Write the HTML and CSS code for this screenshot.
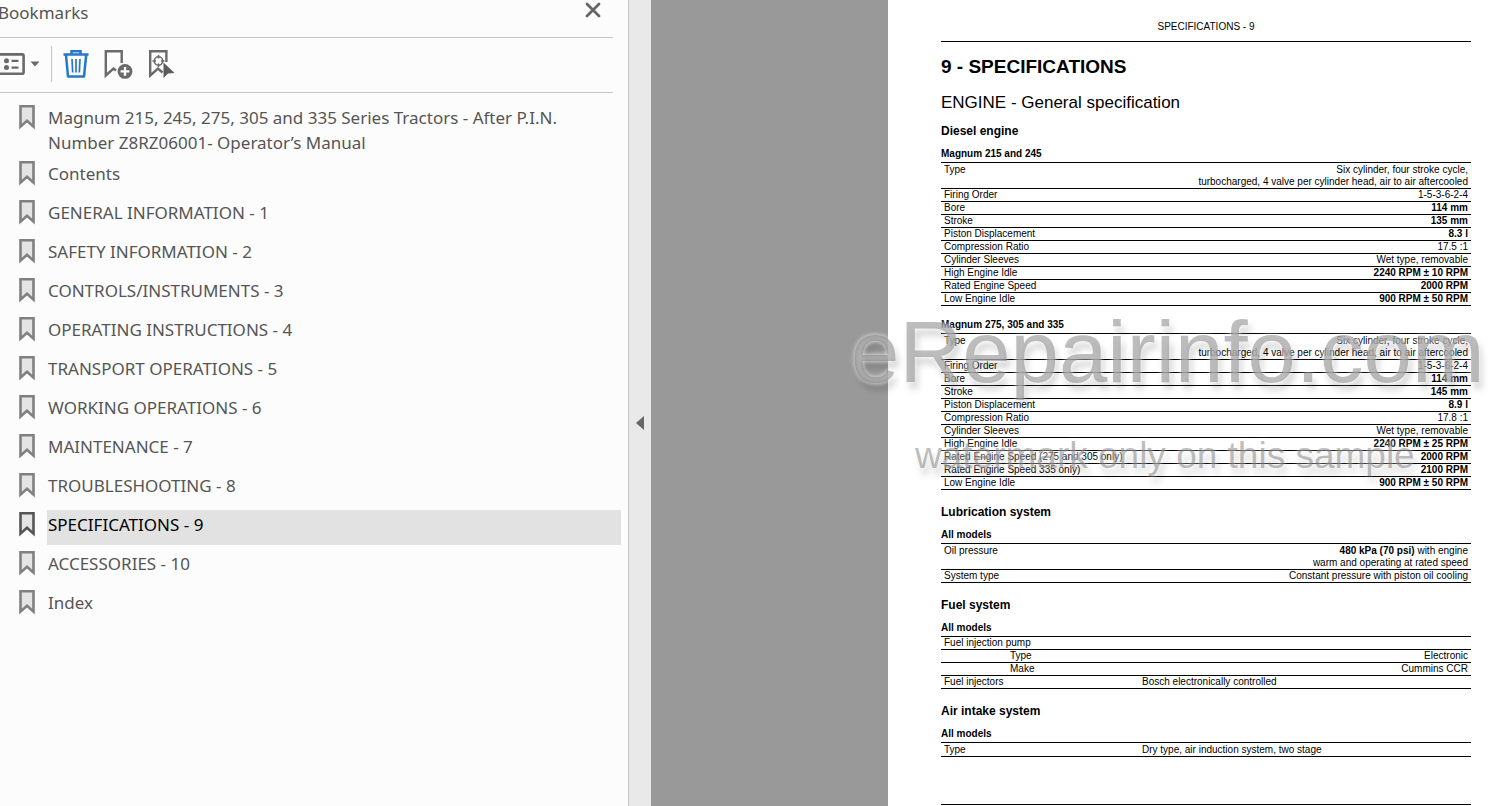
FILE: index.html
```html
<!DOCTYPE html>
<html lang="en">

<head>
    <meta charset="UTF-8">
    <meta name="viewport" content="width=device-width, initial-scale=1.0">
    <link rel="stylesheet" href="styles.css">
    <title>Operator's Manual</title>
</head>

<body>
    <!-- bookmark shape shared by all list items -->
    <svg class="sprite" aria-hidden="true">
        <symbol id="bookmark" viewBox="0 0 18 26">
            <path d="M2.5 2.2H15.5V22.6L9 16.8L2.5 22.6Z" />
        </symbol>
    </svg>

    <div class="viewer">
        <aside class="sidebar">
            <div class="sidebar-header">
                <h2>Bookmarks</h2>
                <button class="icon-button" aria-label="Close">
                    <svg width="18" height="18" viewBox="0 0 18 18"><path d="M3 3L15 15M15 3L3 15" fill="none" stroke="#666" stroke-width="2.8" stroke-linecap="round" /></svg>
                </button>
            </div>
            <div class="toolbar">
                <button class="icon-button options" aria-label="Options">
                    <svg width="40" height="32" viewBox="0 0 40 32">
                        <rect x="-3" y="6.4" width="26.6" height="19.4" rx="1.5" fill="none" stroke="#6a6a6a" stroke-width="2.6" />
                        <circle cx="6.5" cy="12.8" r="2.5" fill="#6a6a6a" />
                        <circle cx="6.5" cy="19.6" r="2.5" fill="#6a6a6a" />
                        <path d="M11.5 12.8H18.5M11.5 19.6H18.5" stroke="#6a6a6a" stroke-width="2.2" />
                        <path d="M30.5 13.5H39.5L35 18.5Z" fill="#6a6a6a" />
                    </svg>
                </button>
                <span class="separator"></span>
                <button class="icon-button" aria-label="Delete bookmark">
                    <svg width="28" height="32" viewBox="0 0 28 32" fill="none" stroke="#2578c8" stroke-width="2.5">
                        <path d="M1.5 6.5H26.5" />
                        <path d="M9.5 6V3.2H18.5V6" />
                        <path d="M4 7L6 28.5H22L24.2 7" stroke-linejoin="round" />
                        <path d="M10 11L10.7 24.5M14 11V24.5M18 11L17.3 24.5" stroke-width="1.7" />
                    </svg>
                </button>
                <button class="icon-button" aria-label="New bookmark">
                    <svg width="30" height="32" viewBox="0 0 30 32">
                        <path d="M17.7 15V3.2H1.8V27.5L9.5 20.5L12 22.5" fill="none" stroke="#6a6a6a" stroke-width="2.4" />
                        <circle cx="21" cy="23.4" r="7.4" fill="#6a6a6a" />
                        <path d="M21 19V27.8M16.6 23.4H25.4" stroke="#fff" stroke-width="2.4" />
                    </svg>
                </button>
                <button class="icon-button" aria-label="Find current bookmark">
                    <svg width="28" height="32" viewBox="0 0 28 32">
                        <path d="M18.4 14V3.2H2.2V27.5L10 20.5L14.5 24.5" fill="none" stroke="#6a6a6a" stroke-width="2.4" />
                        <circle cx="10.5" cy="13" r="4.2" fill="none" stroke="#6a6a6a" stroke-width="1.6" />
                        <path d="M10.5 7V10.5M10.5 15.5V19M4.5 13H8M13 13H16.5" stroke="#6a6a6a" stroke-width="1.6" />
                        <path d="M15.5 14.5L26.5 25L20 25.5L15.5 30Z" fill="#5c5c5c" />
                    </svg>
                </button>
            </div>
            <nav>
                <ul class="bookmarks">
                    <li class="long"><svg class="mark"><use href="#bookmark" /></svg><a href="#">Magnum 215, 245, 275, 305 and 335 Series Tractors - After P.I.N.<br>Number Z8RZ06001- Operator’s Manual</a></li>
                    <li><svg class="mark"><use href="#bookmark" /></svg><a href="#">Contents</a></li>
                    <li><svg class="mark"><use href="#bookmark" /></svg><a href="#">GENERAL INFORMATION - 1</a></li>
                    <li><svg class="mark"><use href="#bookmark" /></svg><a href="#">SAFETY INFORMATION - 2</a></li>
                    <li><svg class="mark"><use href="#bookmark" /></svg><a href="#">CONTROLS/INSTRUMENTS - 3</a></li>
                    <li><svg class="mark"><use href="#bookmark" /></svg><a href="#">OPERATING INSTRUCTIONS - 4</a></li>
                    <li><svg class="mark"><use href="#bookmark" /></svg><a href="#">TRANSPORT OPERATIONS - 5</a></li>
                    <li><svg class="mark"><use href="#bookmark" /></svg><a href="#">WORKING OPERATIONS - 6</a></li>
                    <li><svg class="mark"><use href="#bookmark" /></svg><a href="#">MAINTENANCE - 7</a></li>
                    <li><svg class="mark"><use href="#bookmark" /></svg><a href="#">TROUBLESHOOTING - 8</a></li>
                    <li class="active"><svg class="mark"><use href="#bookmark" /></svg><a href="#">SPECIFICATIONS - 9</a></li>
                    <li><svg class="mark"><use href="#bookmark" /></svg><a href="#">ACCESSORIES - 10</a></li>
                    <li><svg class="mark"><use href="#bookmark" /></svg><a href="#">Index</a></li>
                </ul>
            </nav>
        </aside>

        <button class="splitter" aria-label="Collapse panel">
            <svg width="8" height="14" viewBox="0 0 8 14"><path d="M8 0V14L0 7Z" fill="#666" /></svg>
        </button>

        <main class="canvas">
            <article class="page">
                <header class="page-header">SPECIFICATIONS - 9</header>
                <h1>9 - SPECIFICATIONS</h1>
                <h2>ENGINE - General specification</h2>

                <h3>Diesel engine</h3>
                <h4>Magnum 215 and 245</h4>
                <table>
                    <tr class="tall"><td>Type</td><td>Six cylinder, four stroke cycle,<br>turbocharged, 4 valve per cylinder head, air to air aftercooled</td></tr>
                    <tr><td>Firing Order</td><td>1-5-3-6-2-4</td></tr>
                    <tr><td>Bore</td><td><b>114 mm</b></td></tr>
                    <tr><td>Stroke</td><td><b>135 mm</b></td></tr>
                    <tr><td>Piston Displacement</td><td><b>8.3 l</b></td></tr>
                    <tr><td>Compression Ratio</td><td>17.5 :1</td></tr>
                    <tr><td>Cylinder Sleeves</td><td>Wet type, removable</td></tr>
                    <tr><td>High Engine Idle</td><td><b>2240 RPM ± 10 RPM</b></td></tr>
                    <tr><td>Rated Engine Speed</td><td><b>2000 RPM</b></td></tr>
                    <tr><td>Low Engine Idle</td><td><b>900 RPM ± 50 RPM</b></td></tr>
                </table>

                <h4>Magnum 275, 305 and 335</h4>
                <table>
                    <tr class="tall"><td>Type</td><td>Six cylinder, four stroke cycle,<br>turbocharged, 4 valve per cylinder head, air to air aftercooled</td></tr>
                    <tr><td>Firing Order</td><td>1-5-3-6-2-4</td></tr>
                    <tr><td>Bore</td><td><b>114 mm</b></td></tr>
                    <tr><td>Stroke</td><td><b>145 mm</b></td></tr>
                    <tr><td>Piston Displacement</td><td><b>8.9 l</b></td></tr>
                    <tr><td>Compression Ratio</td><td>17.8 :1</td></tr>
                    <tr><td>Cylinder Sleeves</td><td>Wet type, removable</td></tr>
                    <tr><td>High Engine Idle</td><td><b>2240 RPM ± 25 RPM</b></td></tr>
                    <tr><td>Rated Engine Speed (275 and 305 only)</td><td><b>2000 RPM</b></td></tr>
                    <tr><td>Rated Engine Speed 335 only)</td><td><b>2100 RPM</b></td></tr>
                    <tr><td>Low Engine Idle</td><td><b>900 RPM ± 50 RPM</b></td></tr>
                </table>

                <h3>Lubrication system</h3>
                <h4>All models</h4>
                <table>
                    <tr class="tall"><td>Oil pressure</td><td><b>480 kPa (70 psi)</b> with engine<br>warm and operating at rated speed</td></tr>
                    <tr><td>System type</td><td>Constant pressure with piston oil cooling</td></tr>
                </table>

                <h3>Fuel system</h3>
                <h4>All models</h4>
                <table class="split">
                    <tr><td>Fuel injection pump</td><td></td></tr>
                    <tr><td class="indent">Type</td><td>Electronic</td></tr>
                    <tr><td class="indent">Make</td><td>Cummins CCR</td></tr>
                    <tr><td>Fuel injectors</td><td class="left">Bosch electronically controlled</td></tr>
                </table>

                <h3>Air intake system</h3>
                <h4>All models</h4>
                <table class="split">
                    <tr class="tall"><td>Type</td><td class="left">Dry type, air induction system, two stage</td></tr>
                </table>
                <hr>
            </article>

            <div class="watermark" aria-hidden="true">
                <p class="watermark-site">eRepairinfo.com</p>
                <p class="watermark-note">watermark only on this sample</p>
            </div>
        </main>
    </div>
</body>

</html>
```

FILE: styles.css
```css
* {
    box-sizing: border-box;
}

body {
    margin: 0;
    overflow: hidden;
}

h1, h2, h3, h4, p, ul {
    margin: 0;
    padding: 0;
}

.sprite {
    display: none;
}

.viewer {
    display: grid;
    grid-template-columns: 629px 22px 1fr;
    height: 100vh;
}

/* bookmarks panel */
.sidebar {
    overflow: hidden;
    padding-right: 7px;
    background-color: #fcfcfc;
    border-right: 1px solid #c6c6c6;
    color: #555;
    font-family: "Noto Sans", "Open Sans", sans-serif;
    font-size: 17px;
    line-height: 25px;
}

.sidebar-header {
    display: flex;
    justify-content: space-between;
    height: 38px;
    margin-right: 8px;
    padding: 0 11px 0 0;
    border-bottom: 1px solid #c6c6c6;
}

.sidebar-header h2 {
    margin-left: -2px;
    font-size: 17px;
    font-weight: 400;
}

.icon-button {
    display: flex;
    padding: 0;
    background: none;
    border: none;
    cursor: pointer;
}

.sidebar-header .icon-button {
    padding-top: 1px;
}

.toolbar {
    display: flex;
    align-items: center;
    gap: 14px;
    height: 55px;
    margin-right: 8px;
    padding-bottom: 2px;
    border-bottom: 1px solid #c6c6c6;
}

.separator {
    width: 1px;
    height: 36px;
    margin: 0 -4px 0 -3px;
    background-color: #c6c6c6;
}

.bookmarks {
    padding: 10px 0 0 18px;
    list-style: none;
}

.bookmarks li {
    display: flex;
    align-items: flex-start;
    margin-bottom: 4px;
}

.bookmarks a {
    flex: 1;
    margin-left: 11px;
    padding: 2px 0 8px 1px;
    color: inherit;
    text-decoration: none;
}

.bookmarks .long a {
    padding-bottom: 0;
}

.mark {
    flex: none;
    width: 18px;
    height: 26px;
    margin-top: 1px;
    fill: #e4e4e4;
    stroke: #808080;
    stroke-width: 2.6;
}

.active a {
    background-color: #e2e2e2;
    color: #000;
}

.active .mark {
    stroke: #555;
}

.splitter {
    display: flex;
    align-items: center;
    justify-content: center;
    padding: 40px 0 0;
    background-color: #e9e9e9;
    border: none;
    cursor: pointer;
}

/* document */
.canvas {
    position: relative;
    overflow: hidden;
    padding-left: 237px;
    background-color: #999;
}

.page {
    min-height: 100%;
    padding: 21px 21px 0 53px;
    background-color: #fff;
    color: #000;
    font-family: "Liberation Sans", Arial, sans-serif;
    font-size: 10px;
    line-height: 12px;
}

.page-header {
    padding-bottom: 8px;
    border-bottom: 1px solid #000;
    text-align: center;
}

.page h1 {
    margin-top: 13px;
    font-size: 19px;
    line-height: 24px;
}

.page h2 {
    margin-top: 14px;
    font-size: 17px;
    font-weight: 400;
    line-height: 20px;
}

.page h3 {
    margin-top: 13px;
    font-size: 12px;
    line-height: 18px;
}

.page h2 + h3 {
    margin-top: 9px;
}

.page h4 {
    margin-top: 5px;
    font-size: 10px;
    line-height: 17px;
}

.page table + h4 {
    margin-top: 10px;
}

.page table {
    width: 100%;
    border-top: 1px solid #000;
    border-spacing: 0;
}

.page td {
    padding: 0 3px;
    border-bottom: 1px solid #000;
    vertical-align: top;
}

.page td:last-child {
    text-align: right;
}

.page .tall td {
    padding-top: 1px;
}

.page .split td:first-child {
    width: 198px;
}

.page .split .indent {
    padding-left: 69px;
}

.page .split .left {
    text-align: left;
}

.page hr {
    margin: 47px 0 0;
    border: none;
    border-top: 1px solid #000;
}

/* watermark lies over the page and the grey margin */
.watermark {
    position: absolute;
    top: 304px;
    left: 200px;
    color: rgba(110, 110, 110, 0.45);
    font-family: "Liberation Sans", Arial, sans-serif;
    text-shadow: 0 0 5px rgba(255, 255, 255, 0.8), 3px 7px 7px rgba(0, 0, 0, 0.18);
    white-space: nowrap;
    pointer-events: none;
}

.watermark-site {
    font-size: 87px;
    line-height: 96px;
}

.watermark-note {
    padding-left: 64px;
    font-size: 37px;
    line-height: 112px;
}
```
